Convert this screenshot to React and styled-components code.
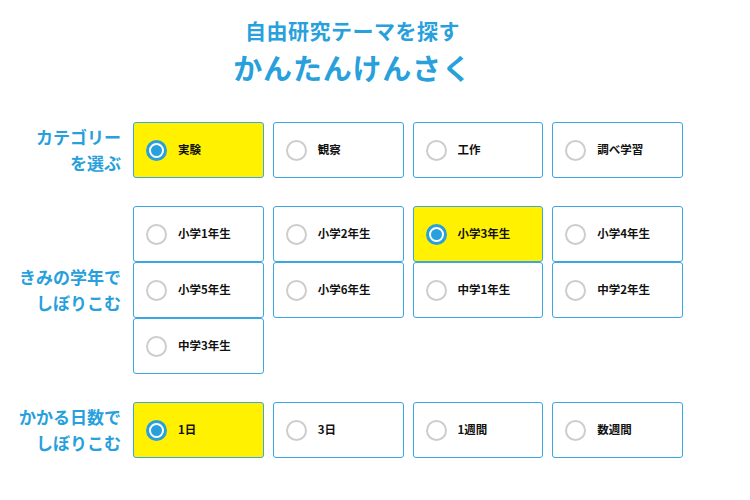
import React, { useState } from "react";
import styled, { createGlobalStyle } from "styled-components";

const GlobalStyle = createGlobalStyle`
  html, body {
    margin: 0;
    padding: 0;
    background: #ffffff;
  }
  body {
    font-family: "Noto Sans CJK JP", "Noto Sans", sans-serif;
  }
`;

const BLUE = "#27a0dc";

const categories = ["実験", "観察", "工作", "調べ学習"];
const grades = [
  "小学1年生",
  "小学2年生",
  "小学3年生",
  "小学4年生",
  "小学5年生",
  "小学6年生",
  "中学1年生",
  "中学2年生",
  "中学3年生",
];
const days = ["1日", "3日", "1週間", "数週間"];

const App = () => {
  const [category, setCategory] = useState("実験");
  const [grade, setGrade] = useState("小学3年生");
  const [day, setDay] = useState("1日");

  return (
    <Page>
      <GlobalStyle />
      <Header>
        <SubTitle>自由研究テーマを探す</SubTitle>
        <Title>かんたんけんさく</Title>
      </Header>

      <Section $top={33}>
        <Label>
          カテゴリー
          <br />
          を選ぶ
        </Label>
        <OptionGrid>
          {categories.map((c) => (
            <Option key={c} $selected={category === c} onClick={() => setCategory(c)}>
              <Radio $selected={category === c} />
              <OptionText>{c}</OptionText>
            </Option>
          ))}
        </OptionGrid>
      </Section>

      <Section $top={28}>
        <Label>
          きみの学年で
          <br />
          しぼりこむ
        </Label>
        <OptionGrid>
          {grades.map((g) => (
            <Option key={g} $selected={grade === g} onClick={() => setGrade(g)}>
              <Radio $selected={grade === g} />
              <OptionText>{g}</OptionText>
            </Option>
          ))}
        </OptionGrid>
      </Section>

      <Section $top={28}>
        <Label>
          かかる日数で
          <br />
          しぼりこむ
        </Label>
        <OptionGrid>
          {days.map((d) => (
            <Option key={d} $selected={day === d} onClick={() => setDay(d)}>
              <Radio $selected={day === d} />
              <OptionText>{d}</OptionText>
            </Option>
          ))}
        </OptionGrid>
      </Section>
    </Page>
  );
};

const Page = styled.div`
  width: 705px;
  padding-top: 15px;
`;

const Header = styled.header`
  display: flex;
  flex-direction: column;
  align-items: center;
  color: ${BLUE};
  font-weight: 700;
`;

const SubTitle = styled.h2`
  margin: 0;
  font-size: 21px;
  line-height: 30px;
  font-weight: 700;
  letter-spacing: 0.5px;
`;

const Title = styled.h1`
  margin: 0;
  font-size: 29px;
  line-height: 44px;
  font-weight: 700;
  letter-spacing: 0.8px;
`;

const Section = styled.section`
  display: grid;
  grid-template-columns: 121px 550px;
  column-gap: 12px;
  align-items: center;
  margin-top: ${(p) => p.$top}px;
`;

const Label = styled.div`
  text-align: right;
  color: ${BLUE};
  font-size: 17px;
  line-height: 26px;
  font-weight: 700;
  white-space: nowrap;
`;

const OptionGrid = styled.div`
  display: grid;
  grid-template-columns: repeat(4, 1fr);
  column-gap: 9px;
`;

const Option = styled.label`
  display: flex;
  align-items: center;
  box-sizing: border-box;
  height: 56px;
  padding-left: 12px;
  border: 1.5px solid #3aa6e2;
  border-radius: 3px;
  background: ${(p) => (p.$selected ? "#fff100" : "#ffffff")};
  cursor: pointer;
`;

const Radio = styled.span`
  position: relative;
  box-sizing: border-box;
  width: 21px;
  height: 21px;
  flex: none;
  border-radius: 50%;
  border: ${(p) => (p.$selected ? `3px solid ${BLUE}` : "2.5px solid #cdcdcd")};
  background: #ffffff;

  &::after {
    content: "";
    display: ${(p) => (p.$selected ? "block" : "none")};
    position: absolute;
    inset: 2px;
    border-radius: 50%;
    background: ${BLUE};
  }
`;

const OptionText = styled.span`
  margin-left: 11px;
  font-size: 11.5px;
  font-weight: 700;
  color: #111111;
  line-height: 1;
`;

export default App;
